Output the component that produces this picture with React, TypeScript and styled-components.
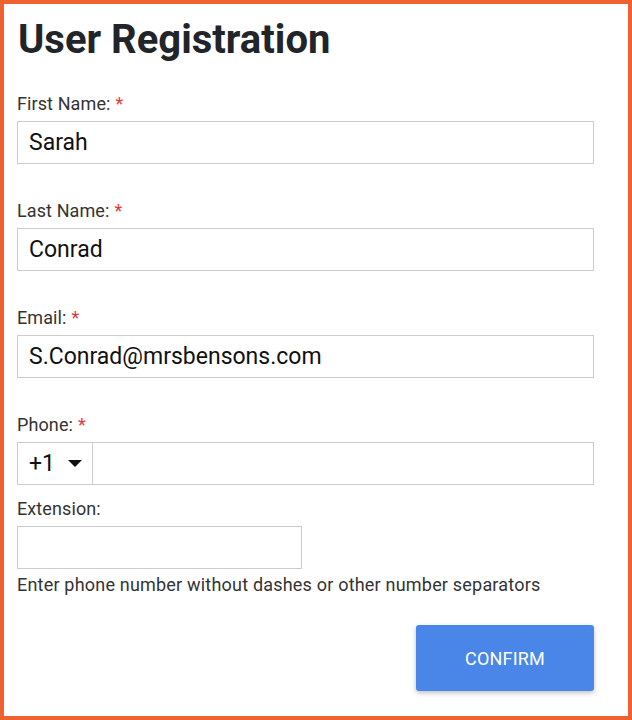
import styled, { createGlobalStyle } from "styled-components";

const GlobalStyle = createGlobalStyle`
  html, body {
    margin: 0;
    padding: 0;
    background: #ffffff;
  }
  * {
    box-sizing: border-box;
  }
`

const Frame = styled.div`
  width: 632px;
  height: 720px;
  border: 4px solid #ef6130;
  background: #ffffff;
  padding: 12px 0 0 13px;
  font-family: Roboto, "Liberation Sans", sans-serif;
  color: #333333;
`

const Form = styled.form`
  width: 577px;
  display: flex;
  flex-direction: column;
`

const Title = styled.h1`
  margin: 0 0 29px 1px;
  font-size: 40px;
  line-height: 48px;
  font-weight: 700;
  color: #212529;
`

const Field = styled.div<{ $gap?: number }>`
  display: flex;
  flex-direction: column;
  margin-bottom: ${p => p.$gap ?? 36}px;
`

const Label = styled.label`
  font-size: 18px;
  line-height: 22px;
  letter-spacing: 0.1px;
  margin-bottom: 6px;
  color: #333333;
`

const Required = styled.span`
  color: #e53935;
  margin-left: 5px;
`

const TextInput = styled.input<{ $width?: number }>`
  width: ${p => (p.$width ? `${p.$width}px` : "100%")};
  height: 43px;
  border: 1px solid #cccccc;
  border-radius: 0;
  padding: 0 11px;
  font-family: Roboto, "Liberation Sans", sans-serif;
  font-size: 23px;
  color: #111111;
  background: #ffffff;
  outline: none;
`

const PhoneBox = styled.div`
  display: flex;
  width: 100%;
  height: 43px;
  border: 1px solid #cccccc;
`

const CountryCode = styled.div`
  width: 75px;
  flex: none;
  display: flex;
  align-items: center;
  padding-left: 11px;
  gap: 13px;
  border-right: 1px solid #cccccc;
  font-size: 23px;
  color: #111111;
`

const Caret = styled.span`
  width: 0;
  height: 0;
  border-left: 7px solid transparent;
  border-right: 7px solid transparent;
  border-top: 7px solid #111111;
`

const PhoneInput = styled.input`
  flex: 1;
  border: none;
  outline: none;
  padding: 0 11px;
  font-family: Roboto, "Liberation Sans", sans-serif;
  font-size: 23px;
  background: transparent;
`

const Hint = styled.p`
  margin: 5px 0 29px;
  font-size: 18px;
  line-height: 22px;
  letter-spacing: 0.2px;
  color: #333333;
`

const Actions = styled.div`
  display: flex;
  justify-content: flex-end;
`

const ConfirmButton = styled.button`
  width: 178px;
  height: 66px;
  border: none;
  border-radius: 3px;
  background: #4a86e8;
  color: #ffffff;
  font-family: Roboto, "Liberation Sans", sans-serif;
  font-size: 18px;
  letter-spacing: 0.2px;
  box-shadow: 0 2px 5px rgba(0, 0, 0, 0.25);
  cursor: pointer;
`

export default function App() {
  return <>
    <GlobalStyle/>
    <Frame>
      <Form onSubmit={e => e.preventDefault()}>
        <Title>User Registration</Title>
        <Field>
          <Label>First Name:<Required>*</Required></Label>
          <TextInput defaultValue="Sarah"/>
        </Field>
        <Field>
          <Label>Last Name:<Required>*</Required></Label>
          <TextInput defaultValue="Conrad"/>
        </Field>
        <Field>
          <Label>Email:<Required>*</Required></Label>
          <TextInput defaultValue="S.Conrad@mrsbensons.com"/>
        </Field>
        <Field $gap={13}>
          <Label>Phone:<Required>*</Required></Label>
          <PhoneBox>
            <CountryCode>+1<Caret/></CountryCode>
            <PhoneInput/>
          </PhoneBox>
        </Field>
        <Field $gap={0}>
          <Label>Extension:</Label>
          <TextInput $width={285}/>
        </Field>
        <Hint>Enter phone number without dashes or other number separators</Hint>
        <Actions>
          <ConfirmButton type="submit">CONFIRM</ConfirmButton>
        </Actions>
      </Form>
    </Frame>
  </>
}
